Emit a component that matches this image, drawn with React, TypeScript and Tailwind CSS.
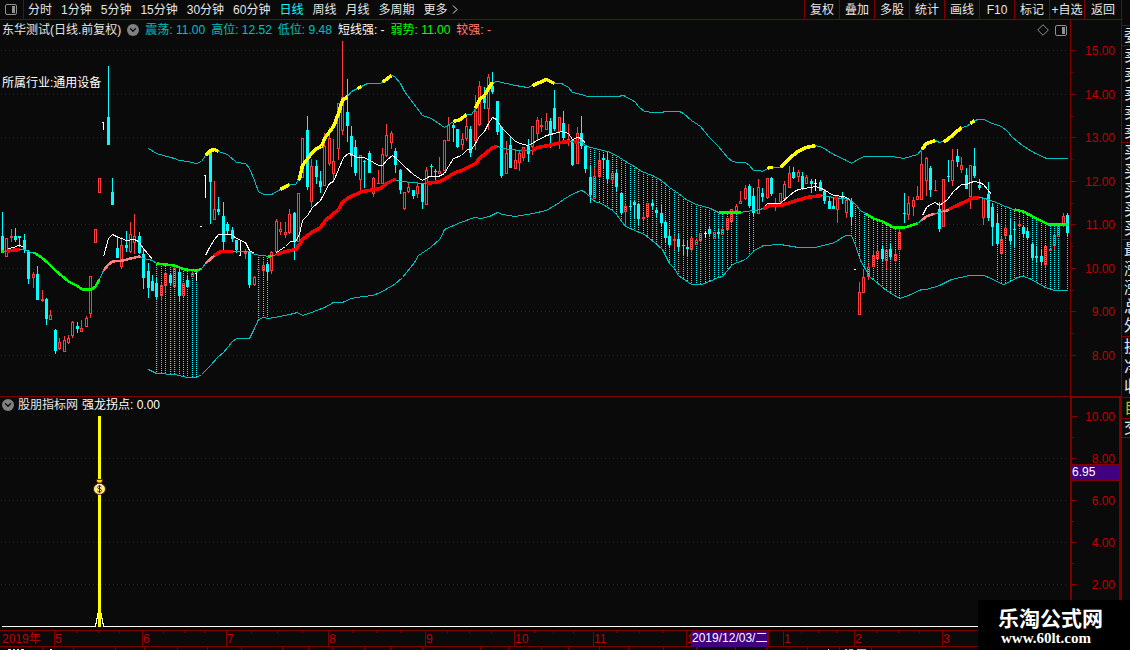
import { ChevronDown } from 'lucide-react';

type Point = [number, number];
// x, high, low, body top, body bottom
type Candle = [number, number, number, number, number];

const periods = ['分时', '1分钟', '5分钟', '15分钟', '30分钟', '60分钟', '日线', '周线', '月线', '多周期'];
const tools = ['复权', '叠加', '多股', '统计', '画线', 'F10', '标记', '+自选'];
const months = ['5', '6', '7', '8', '9', '10', '11', '1', '1', '2', '3'];
const prices = ['15.00', '14.00', '13.00', '12.00', '11.00', '10.00', '9.00', '8.00'];
const priceRows = [50, 94, 137, 181, 224, 268, 311, 355];
const levels = ['10.00', '8.00', '6.00', '4.00', '2.00'];
const levelRows = [416, 458, 500, 542, 584];

const quoteGroups = [
  { height: 'h-[97px]', rows: ['卖', '卖', '卖', '卖', '卖'] },
  { height: 'h-[97px]', rows: ['买', '买', '买', '买', '买'] },
  { height: 'h-[97px]', rows: ['最', '涨', '涨', '总', '外'] },
  { height: 'h-[61px]', rows: ['换', '净', '收'] },
];

const toPoints = (text: string): Point[] =>
  text.trim().split(/\s+/).map((p) => p.split(',').map(Number) as Point);

const upper = toPoints(`
  148,148 156,153 170,157 174,158 179,160 187,161 196,163 201,161 205,155 210,150 214,149 218,151 227,154
  236,162 245,163 249,168 254,180 258,191 263,194 271,194 280,189 289,184 295,184 299,178 302,165 311,153
  316,148 321,146 324,138 333,126 338,113 342,100 347,96 351,91 361,86 367,83 380,83 383,81 391,75 394,76
  400,83 404,91 413,103 422,115 431,118 444,127 453,121 460,119 466,114 471,114 475,108 479,99 484,95
  488,88 492,82 497,81 515,85 527,87 532,85 546,79 554,83 561,83 568,87 572,92 581,94 587,96 617,96
  623,95 634,101 639,107 644,111 652,112 661,112 665,111 679,111 683,113 691,120 700,126 709,137 718,146
  727,157 732,161 737,162 745,162 749,165 753,170 759,170 762,171 769,167 780,167 789,158 797,151 806,147
  815,145 822,147 833,154 846,160 851,163 859,158 864,156 892,156 903,158 917,154 922,148 926,143 935,140
  939,142 946,140 961,127 966,126 974,120 978,119 983,119 992,123 1001,126 1007,131 1012,137 1022,145
  1033,152 1046,158 1067,158`);

const middle = toPoints(`
  0,251 6,251 11,250 19,249 24,249 28,251 35,253 41,257 48,263 55,270 68,281 76,285 82,289 91,289 95,286
  99,279 103,270 108,264 112,261 123,260 130,258 139,256 143,258 148,259 152,260 156,263 174,265 184,269
  197,270 202,267 205,263 214,255 220,251 232,251 249,251 254,254 269,256 276,254 285,251 295,249 299,244
  302,239 311,232 320,227 325,220 338,209 342,202 348,197 362,191 380,188 386,183 394,179 401,181 412,182
  422,183 440,181 445,178 453,173 461,170 475,163 479,158 492,147 497,146 502,148 519,150 523,150 532,150
  537,147 553,144 560,142 568,141 581,142 587,146 594,148 607,151 616,155 625,161 634,166 641,171 652,175
  661,180 669,187 678,193 687,200 696,204 710,208 718,212 740,212 745,211 755,210 763,208 770,205 780,205
  793,201 806,197 821,195 828,196 838,198 845,198 850,200 855,204 860,210 865,213 873,218 882,221 893,227
  904,227 917,223 922,219 926,216 935,213 939,212 947,210 954,206 963,202 971,198 980,197 988,199 993,201
  998,203 1005,206 1013,209 1023,211 1034,217 1048,224 1067,224`);

const lower = toPoints(`
  148,369 156,373 174,374 187,377 196,377 201,374 210,365 218,356 223,352 232,341 236,338 249,338 254,328
  258,319 263,317 268,318 279,316 289,314 297,312 302,315 311,312 324,307 333,302 342,302 351,298 363,296
  372,295 380,292 394,284 402,277 414,262 418,255 430,247 440,238 444,229 460,222 474,217 480,218 489,216
  497,212 502,214 515,216 532,213 546,210 559,202 563,199 573,193 581,190 585,192 594,201 601,203 612,210
  616,214 625,226 644,234 654,242 662,249 669,263 674,268 678,275 691,284 701,284 709,281 718,277 722,276
  732,264 745,259 754,250 763,245 780,244 798,247 815,247 834,242 845,235 851,235 855,245 860,260 869,276
  886,290 899,298 908,295 921,289 926,289 939,285 951,279 969,275 983,275 991,278 996,281 1003,284
  1008,282 1017,277 1023,276 1029,278 1045,287 1054,290 1067,290`);

const shortLines = [
  '8,248 13,247 18,245 23,246',
  '103,256 108,238 112,234 116,236 126,240 134,239 138,241 143,248 152,259',
  '205,255 209,247 214,239 218,234 231,234 236,238 245,242 249,250 254,253',
  `276,252 285,246 290,241 295,241 299,234 302,220 307,215 312,207 320,200 329,183 333,181 338,169 343,157
   348,153 352,154 356,157 363,157 368,159 378,165 382,165 387,159 392,155 396,158 404,166 413,174 422,180
   429,176 438,176 444,173 448,166 453,158 461,155 467,149 471,149 475,143 479,136 484,131 488,123 492,117
   496,119 501,127 508,134 514,140 519,143 528,145 535,141 546,135 554,133 561,131 568,133 572,139 577,137
   581,138 585,143`,
  '762,208 767,203 780,203 789,195 794,191 798,189 815,186 821,188 828,192 833,195 843,196 850,199',
  `922,215 926,207 930,204 935,202 939,205 947,199 953,191 961,184 966,184 970,182 974,181 979,182 983,184
   991,194`,
];

const yellowRanges: Point[] = [
  [205, 218], [280, 289], [298, 347], [357, 361], [382, 391], [453, 466], [475, 492], [532, 554],
  [767, 772], [780, 815], [921, 935], [943, 961], [970, 974],
];
const redRanges: Point[] = [
  [6, 19], [214, 232], [276, 395], [426, 497], [520, 524], [532, 569], [573, 578], [762, 821], [834, 838], [948, 979],
];
const greenRanges: Point[] = [[0, 3], [33, 99], [156, 201], [267, 271], [718, 740], [865, 917], [1014, 1067]];
const pinkRanges: Point[] = [[103, 140], [205, 214], [921, 934], [943, 948]];

const bandColumns = [
  156, 161, 165, 170, 174, 179, 183, 187, 192, 196, 258, 263, 267,
  590, 594, 599, 603, 607, 612, 616, 621, 625, 630, 634, 638, 643, 647, 652, 656, 661, 665, 669, 674, 678,
  683, 687, 691, 696, 700, 705, 709, 714, 718, 722, 727, 731, 736, 749, 753,
  851, 855, 859, 864, 868, 873, 877, 882, 886, 890, 895, 899,
  997, 1001, 1005, 1010, 1014, 1019, 1023, 1027, 1032, 1036, 1041, 1045, 1050, 1054, 1058, 1067,
];

const rising: Candle[] = [
  [6, 238, 257, 238, 257], [11, 229, 242, 236, 238], [33, 272, 288, 274, 278], [42, 290, 302, 299, 301],
  [50, 310, 320, 315, 320], [59, 338, 350, 342, 349], [64, 336, 352, 340, 352], [68, 335, 344, 338, 343],
  [72, 321, 338, 322, 336], [81, 320, 332, 328, 332], [86, 316, 327, 318, 327], [90, 276, 318, 276, 314],
  [95, 229, 243, 229, 243], [99, 178, 193, 178, 193], [121, 237, 269, 245, 267], [130, 222, 253, 234, 252],
  [134, 214, 254, 236, 243], [161, 283, 301, 285, 296], [165, 272, 292, 273, 286], [174, 267, 287, 268, 287],
  [183, 283, 297, 283, 296], [192, 271, 277, 273, 277], [214, 181, 220, 209, 220], [245, 249, 259, 252, 254],
  [254, 276, 286, 277, 285], [258, 269, 270, 269, 270], [263, 261, 275, 265, 271], [271, 251, 274, 252, 271],
  [276, 219, 252, 221, 252], [280, 222, 235, 229, 232], [285, 222, 238, 232, 235], [289, 209, 234, 214, 233],
  [298, 193, 242, 193, 242], [302, 138, 178, 138, 178], [311, 159, 207, 166, 202], [324, 133, 186, 146, 186],
  [329, 127, 166, 138, 164], [333, 139, 181, 161, 174], [338, 103, 160, 103, 149], [342, 41, 135, 97, 131],
  [360, 155, 192, 155, 180], [373, 177, 197, 178, 194], [378, 170, 184, 183, 184], [382, 148, 184, 154, 184],
  [386, 124, 157, 135, 156], [391, 131, 149, 133, 143], [404, 192, 210, 192, 209], [408, 183, 193, 187, 192],
  [417, 183, 198, 186, 194], [426, 167, 205, 170, 205], [439, 157, 174, 171, 174], [444, 140, 171, 140, 171],
  [448, 117, 141, 125, 141], [462, 133, 150, 139, 145], [466, 118, 141, 126, 139], [475, 95, 150, 111, 141],
  [479, 81, 126, 86, 125], [488, 74, 130, 77, 109], [506, 141, 174, 153, 174], [515, 149, 169, 160, 169],
  [519, 150, 171, 153, 163], [523, 147, 161, 147, 158], [532, 126, 155, 126, 147], [537, 117, 141, 120, 134],
  [541, 118, 132, 125, 127], [546, 113, 130, 121, 130], [559, 117, 149, 117, 132], [568, 124, 146, 139, 141],
  [577, 127, 164, 133, 164], [594, 167, 199, 176, 199], [599, 154, 178, 160, 177], [612, 172, 183, 173, 180],
  [625, 203, 227, 206, 212], [643, 213, 220, 217, 219], [647, 203, 217, 203, 217], [674, 235, 250, 239, 241],
  [691, 237, 253, 238, 250], [696, 238, 245, 240, 245], [700, 233, 241, 233, 241], [714, 232, 239, 232, 239],
  [722, 227, 235, 229, 235], [727, 218, 230, 218, 230], [731, 209, 222, 209, 222], [736, 204, 211, 206, 211],
  [740, 191, 204, 201, 204], [745, 185, 200, 188, 199], [758, 179, 214, 187, 214], [767, 178, 199, 178, 198],
  [775, 198, 211, 203, 204], [780, 193, 204, 193, 202], [784, 181, 199, 184, 199], [789, 166, 188, 173, 188],
  [798, 170, 182, 172, 177], [806, 175, 184, 177, 184], [837, 196, 223, 197, 210], [846, 197, 218, 200, 213],
  [859, 282, 315, 292, 315], [863, 269, 293, 277, 293], [868, 264, 280, 267, 277], [873, 250, 267, 255, 267],
  [877, 246, 259, 251, 259], [886, 250, 269, 250, 261], [895, 250, 262, 254, 261], [899, 228, 250, 232, 250],
  [908, 196, 220, 203, 215], [913, 197, 216, 200, 207], [917, 186, 200, 196, 200], [921, 151, 200, 164, 200],
  [926, 157, 196, 158, 181], [935, 180, 190, 190, 191], [943, 179, 227, 179, 227], [952, 149, 186, 160, 181],
  [961, 157, 173, 165, 170], [970, 165, 209, 165, 197], [983, 198, 225, 198, 218], [1001, 237, 255, 239, 254],
  [1005, 224, 238, 228, 236], [1019, 220, 226, 224, 226], [1045, 246, 267, 246, 265], [1050, 249, 251, 249, 251],
  [1054, 235, 250, 235, 246], [1058, 223, 237, 225, 237], [1063, 213, 227, 216, 224],
];

const falling: Candle[] = [
  [2, 212, 252, 236, 251], [15, 228, 242, 236, 240], [19, 236, 247, 236, 238], [24, 234, 253, 240, 249],
  [28, 250, 284, 251, 279], [37, 266, 300, 274, 300], [46, 298, 325, 299, 319], [55, 329, 354, 330, 351],
  [77, 322, 333, 326, 329], [108, 66, 145, 117, 145], [112, 178, 205, 192, 205], [117, 236, 258, 248, 258],
  [126, 231, 252, 245, 248], [139, 232, 254, 236, 253], [143, 249, 289, 254, 278], [148, 263, 298, 271, 288],
  [152, 275, 291, 281, 291], [156, 278, 299, 283, 297], [170, 273, 285, 275, 283], [179, 268, 302, 272, 296],
  [187, 275, 287, 280, 287], [210, 150, 224, 152, 182], [218, 197, 215, 209, 212], [223, 202, 250, 216, 242],
  [227, 222, 234, 224, 231], [232, 227, 242, 230, 239], [236, 240, 253, 240, 250], [249, 250, 288, 252, 285],
  [267, 263, 281, 264, 272], [294, 212, 260, 213, 242], [307, 116, 190, 130, 187], [316, 160, 184, 166, 177],
  [320, 171, 193, 181, 187], [347, 79, 142, 112, 126], [351, 126, 167, 136, 156], [355, 140, 176, 147, 173],
  [364, 160, 188, 161, 162], [369, 151, 173, 153, 173], [395, 148, 173, 151, 165], [400, 169, 194, 170, 190],
  [413, 190, 199, 190, 196], [422, 183, 209, 184, 202], [431, 164, 176, 166, 167], [435, 169, 180, 171, 172],
  [453, 123, 142, 125, 128], [457, 129, 148, 129, 147], [470, 126, 157, 129, 153], [484, 87, 109, 96, 103],
  [492, 72, 94, 86, 92], [497, 101, 135, 101, 132], [501, 126, 178, 127, 176], [510, 136, 168, 145, 168],
  [528, 139, 162, 146, 154], [550, 118, 148, 121, 135], [554, 90, 131, 108, 129], [563, 111, 140, 123, 138],
  [572, 140, 166, 140, 165], [581, 116, 149, 133, 146], [585, 145, 173, 146, 169], [590, 166, 203, 177, 195],
  [603, 154, 168, 158, 160], [607, 152, 183, 160, 179], [616, 170, 192, 173, 187], [621, 192, 215, 193, 213],
  [630, 200, 210, 206, 207], [634, 200, 218, 202, 205], [638, 203, 225, 204, 219], [652, 200, 210, 203, 206],
  [656, 207, 218, 210, 213], [661, 205, 227, 213, 223], [665, 221, 242, 222, 238], [669, 230, 248, 236, 245],
  [678, 233, 251, 239, 247], [683, 240, 256, 245, 246], [687, 240, 256, 247, 249], [709, 226, 237, 229, 234],
  [718, 229, 238, 232, 234], [749, 184, 208, 186, 206], [753, 188, 217, 196, 213], [762, 188, 202, 193, 197],
  [771, 177, 196, 178, 194], [793, 167, 179, 172, 178], [802, 172, 190, 176, 189], [811, 179, 193, 181, 184],
  [820, 180, 191, 182, 191], [824, 189, 204, 191, 201], [829, 196, 209, 201, 209], [833, 197, 209, 206, 209],
  [842, 192, 204, 196, 199], [851, 198, 226, 201, 217], [882, 245, 262, 249, 259], [890, 243, 259, 249, 257],
  [904, 193, 223, 213, 214], [930, 166, 197, 168, 190], [939, 202, 232, 209, 229], [948, 160, 182, 176, 177],
  [957, 149, 167, 156, 162], [966, 168, 189, 175, 189], [974, 148, 178, 166, 176], [979, 179, 190, 185, 188],
  [988, 182, 221, 194, 218], [992, 203, 246, 207, 227], [997, 214, 245, 223, 244], [1010, 218, 245, 235, 241],
  [1014, 221, 248, 229, 230], [1023, 225, 237, 227, 234], [1027, 228, 239, 231, 238], [1032, 242, 260, 244, 258],
  [1036, 247, 262, 256, 258], [1041, 250, 265, 256, 262], [1067, 213, 237, 215, 233],
];

function valueAt(line: Point[], x: number) {
  const i = line.findIndex((p) => p[0] >= x);
  if (i <= 0) return line[i < 0 ? line.length - 1 : 0][1];
  const [x0, y0] = line[i - 1];
  const [x1, y1] = line[i];
  return Math.round(y0 + ((y1 - y0) * (x - x0)) / (x1 - x0));
}

function slice(line: Point[], from: number, to: number) {
  const inner = line.filter((p) => p[0] > from && p[0] < to);
  return [[from, valueAt(line, from)], ...inner, [to, valueAt(line, to)]].join(' ');
}

function Segments({ line, ranges, color, width }: { line: Point[]; ranges: Point[]; color: string; width: number }) {
  return (
    <g stroke={color} strokeWidth={width} strokeLinejoin="round">
      {ranges.map(([a, b]) => (
        <polyline key={a} points={slice(line, a, b)} />
      ))}
    </g>
  );
}

function GridLines({ rows }: { rows: number[] }) {
  return (
    <g stroke="#800000" strokeDasharray="1 3">
      {rows.map((y) => (
        <line key={y} x1="1" x2="1068" y1={y + 0.5} y2={y + 0.5} />
      ))}
    </g>
  );
}

function PriceChart() {
  return (
    <svg
      className="absolute inset-0 h-full w-full"
      viewBox="0 20 1070 376"
      preserveAspectRatio="none"
      shapeRendering="crispEdges"
      fill="none"
    >
      <GridLines rows={priceRows} />
      <g stroke="#00ffff" strokeDasharray="1 1">
        {bandColumns.map((x) => (
          <line key={x} x1={x + 0.5} x2={x + 0.5} y1={valueAt(middle, x)} y2={valueAt(lower, x)} />
        ))}
      </g>
      {rising.map(([x, high, low, top, bottom]) => (
        <g key={x} fill="#ff3c3c">
          {top > high && <rect x={x} y={high} width="1" height={top - high} />}
          {low > bottom && <rect x={x} y={bottom} width="1" height={low - bottom} />}
          {bottom - top < 3 ? (
            <rect x={x - 1} y={top} width="3" height={bottom - top} />
          ) : (
            <rect x={x - 0.5} y={top + 0.5} width="2" height={bottom - top - 1} fill="none" stroke="#ff3c3c" />
          )}
        </g>
      ))}
      {falling.map(([x, high, low, top, bottom]) => (
        <g key={x} fill="#00ffff">
          <rect x={x} y={high} width="1" height={low - high} />
          <rect x={x - 1} y={top} width="3" height={bottom - top} />
        </g>
      ))}
      <g stroke="#ffffff">
        <path d="M102 122.500h2M103.500 122v8M195 273.500h2M196.500 273v8M200 226.500h2M204 175.500h2M205.500 175v23" />
        <path d="M240.500 241v15M239 255.500h2M705.500 231v7M704 233.500h3M815.500 179v12M814 183.500h3M854 269.500h2" />
      </g>
      <g transform="translate(0.5 0.5)">
        <g stroke="#00c0c0">
          <polyline points={upper.join(' ')} />
          <polyline points={middle.join(' ')} />
          <polyline points={lower.join(' ')} />
        </g>
        <g stroke="#ffffff">
          {shortLines.map((points) => (
            <polyline key={points} points={points} />
          ))}
        </g>
        <Segments line={upper} ranges={yellowRanges} color="#ffff00" width={3.5} />
        <Segments line={middle} ranges={redRanges} color="#ff0000" width={3.5} />
        <Segments line={middle} ranges={greenRanges} color="#00ff00" width={2.5} />
        <Segments line={middle} ranges={pinkRanges} color="#ff8080" width={2.5} />
      </g>
    </svg>
  );
}

function SignalChart() {
  return (
    <svg className="absolute inset-0 h-full w-full" viewBox="0 397 1070 233" preserveAspectRatio="none" fill="none">
      <g shapeRendering="crispEdges">
        <GridLines rows={levelRows.slice(1)} />
        <path d="M2 626.500h93.500v-3h1v-5h1v-5h4v5h1v5h1v3H1070" stroke="#ffffff" />
        <rect x="98" y="416" width="3" height="211" fill="#ffff00" />
      </g>
      <path d="M96 479.500h7l-1.500 3.500h-4z" fill="#ffe000" stroke="#5a1a1a" />
      <ellipse cx="99.500" cy="489" rx="6" ry="5.500" fill="#fff27a" stroke="#5a1a1a" />
      <path d="M97 484.500h5" stroke="#ffffff" />
      <path
        d="M101.500 487c-.6-.8-1.300-1-2-1-1.100 0-1.900.6-1.900 1.400 0 2 4 1.200 4 3.100 0 .9-.9 1.500-2.100 1.500-.9 0-1.700-.4-2.200-1.100M99.500 485v8"
        stroke="#4a1010"
      />
    </svg>
  );
}

function AxisTicks({ viewBox, major, minor }: { viewBox: string; major: number[]; minor: number[] }) {
  return (
    <svg
      className="absolute inset-y-0 left-0 h-full w-[5px]"
      viewBox={viewBox}
      preserveAspectRatio="none"
      shapeRendering="crispEdges"
      fill="#800000"
    >
      {major.map((y) => (
        <rect key={y} x="0" y={y} width="5" height="1" />
      ))}
      {minor.map((y) => (
        <rect key={y} x="0" y={y} width="2" height="1" />
      ))}
    </svg>
  );
}

function PanelIcon() {
  return (
    <svg className="h-[11px] w-[12px]" viewBox="0 0 12 11" fill="none">
      <rect x="0.500" y="0.500" width="11" height="10" rx="1.500" stroke="#909090" />
      <rect x="7" y="2" width="3" height="7" fill="#909090" />
    </svg>
  );
}

function MenuDot({ label }: { label: string }) {
  return (
    <button aria-label={label} className="flex size-3 items-center justify-center rounded-full bg-[#808080]">
      <ChevronDown className="size-[10px] text-[#0a0a0a]" strokeWidth={3} />
    </button>
  );
}

export default function App() {
  return (
    <div className="relative flex h-screen w-full overflow-hidden bg-[#0a0a0a] font-['Liberation_Sans','Noto_Sans_CJK_SC',sans-serif] text-[12px] leading-4 text-[#e6e6e6]">
      <main className="flex min-w-0 flex-1 flex-col">
        {/* Period and tool bar */}
        <nav className="flex h-5 shrink-0 whitespace-nowrap border-b border-[#800000]">
          <button aria-label="侧栏" className="flex w-6 items-center border-r border-[#800000] pl-[5px]">
            <PanelIcon />
          </button>
          <div className="flex flex-1 items-center gap-[9px] pl-1">
            {periods.map((name) => (
              <button key={name} className={name === '日线' ? 'text-[#00ffff]' : ''}>
                {name}
              </button>
            ))}
            <button className="flex items-center gap-1">
              更多
              <svg className="h-[9px] w-[6px]" viewBox="0 0 6 9" fill="none" stroke="#e6e6e6">
                <path d="M1 .5l4 4-4 4" />
              </svg>
            </button>
          </div>
          <div className="flex">
            {tools.map((name) => (
              <button key={name} className="w-[35px] border-l border-[#800000] text-center">
                {name}
              </button>
            ))}
            <button className="w-[37px] border-l border-[#800000] text-center">返回</button>
          </div>
        </nav>

        {/* Price chart */}
        <section className="flex min-h-0 flex-[376]">
          <div className="relative flex-1">
            <PriceChart />
            <div className="relative flex items-center gap-[6px] whitespace-nowrap pl-[2px] pt-[2px]">
              <h1>东华测试(日线.前复权)</h1>
              <MenuDot label="主图菜单" />
              <span className="text-[#00c0c0]">震荡: 11.00</span>
              <span className="text-[#00c0c0]">高位: 12.52</span>
              <span className="text-[#00c0c0]">低位: 9.48</span>
              <span className="text-white">短线强: -</span>
              <span className="text-[#00ff00]">弱势: 11.00</span>
              <span className="text-[#ff8080]">较强: -</span>
              <div className="ml-auto flex items-center gap-[6px] pr-[3px]">
                <svg className="size-[12px]" viewBox="0 0 12 12" fill="none" stroke="#909090">
                  <path d="M6 .7L11.300 6 6 11.300.7 6z" />
                </svg>
                <PanelIcon />
              </div>
            </div>
            <p className="relative pl-[2px] pt-[37px] text-white">所属行业:通用设备</p>
          </div>
          <div className="relative flex w-[51px] flex-col justify-between border-l border-[#800000] pb-8 pr-[6px] pt-[23px] text-right text-[#c00000]">
            <AxisTicks viewBox="0 20 5 376" major={priceRows} minor={[72, 116, 159, 203, 246, 290, 333]} />
            {prices.map((price) => (
              <span key={price}>{price}</span>
            ))}
          </div>
        </section>

        {/* Signal chart */}
        <section className="flex min-h-0 flex-[234]">
          <div className="relative flex-1 border-t border-[#800000]">
            <SignalChart />
            <div className="relative flex items-center gap-1 whitespace-nowrap pl-[2px] text-white">
              <MenuDot label="副图菜单" />
              <h2 className="text-[#e6e6e6]">股朋指标网</h2>
              <span>强龙拐点: 0.00</span>
            </div>
          </div>
          <div className="relative flex w-[51px] flex-col justify-between border-x-2 border-t-2 border-[#800000] pb-[37px] pr-1 pt-[11px] text-right text-[#c00000]">
            <AxisTicks viewBox="0 398 5 232" major={levelRows} minor={[437, 479, 521, 563]} />
            {levels.map((level) => (
              <span key={level}>{level}</span>
            ))}
            <span className="absolute inset-x-0 top-[66px] h-[17px] border-y border-[#800000] bg-[#400080] text-left leading-[15px] text-white">
              6.95
            </span>
          </div>
        </section>

        {/* Time axis */}
        <div className="grid h-[17px] shrink-0 grid-cols-[54fr_88fr_84fr_102fr_97fr_89fr_79fr_93fr_97fr_71fr_88fr_179fr] border-y border-[#800000] text-[#c00000]">
          <span className="pl-[2px]">2019年</span>
          {months.map((month, i) => (
            <div key={i} className="relative border-l border-[#800000]">
              <div className="absolute inset-x-0 top-0 grid h-[2px] grid-cols-4 divide-x divide-[#800000]">
                <i />
                <i />
                <i />
                <i />
              </div>
              {month}
              {i === 7 && (
                <span className="absolute inset-y-0 left-1 z-10 whitespace-nowrap border-r border-[#800000] bg-[#400080] px-px leading-[15px] text-white">
                  2019/12/03/二
                </span>
              )}
            </div>
          ))}
        </div>
        <svg className="h-[3px] w-full shrink-0" viewBox="0 0 1121 3" preserveAspectRatio="none" shapeRendering="crispEdges">
          <path
            stroke="#800000"
            d="M42.500 0v3M73.500 0v3M115.500 0v3M144.500 0v3M177.500 0v3M207.500 0v3M241.500 0v3M282.500 0v3M308.500 0v3M332.500 0v3M364.500 0v3M390.500 0v3M422.500 0v3M480.500 0v3M508.500 0v3M541.500 0v3M568.500 0v3M599.500 0v3M628.500 0v3M663.500 0v3M696.500 0v3M735.500 0v3M766.500 0v3M807.500 0v3M839.500 0v3M871.500 0v3"
          />
          <path stroke="#e6e6e6" d="M8 2.500h3M13 2.500h2M17 2.500h2M21 2.500h3M50 2.500h2M828 2.500h1" />
          <path stroke="#00ffff" d="M845 2.500h2M849 2.500h4M857 2.500h9" />
        </svg>
      </main>

      {/* Quote column */}
      <aside className="w-[9px] shrink-0 overflow-hidden whitespace-nowrap border-l border-[#800000] pt-[25px] text-[16px]">
        <div className="h-5 border-t border-[#800000] pl-[2px] leading-5">委</div>
        {quoteGroups.map((group, i) => (
          <div key={i} className={`${group.height} flex flex-col justify-around border-t border-[#800000] pl-[2px]`}>
            {group.rows.map((row, j) => (
              <span key={j}>{row}</span>
            ))}
          </div>
        ))}
        <div className="h-[21px] border-t border-[#800000] pl-[2px] leading-5 text-[#c0c000]">自</div>
        <div className="h-5 border-y border-[#800000] pl-[2px] leading-[18px]">交</div>
      </aside>

      <footer className="absolute bottom-0 right-0 z-20 flex h-[50px] w-[152px] flex-col bg-black pl-5 pt-2 font-bold text-white">
        <p className="text-[21px] leading-[22px]">乐淘公式网</p>
        <a href="#" className="pl-[3px] font-['Liberation_Serif',serif] text-[15px] leading-4">
          www.60lt.com
        </a>
      </footer>
    </div>
  );
}
